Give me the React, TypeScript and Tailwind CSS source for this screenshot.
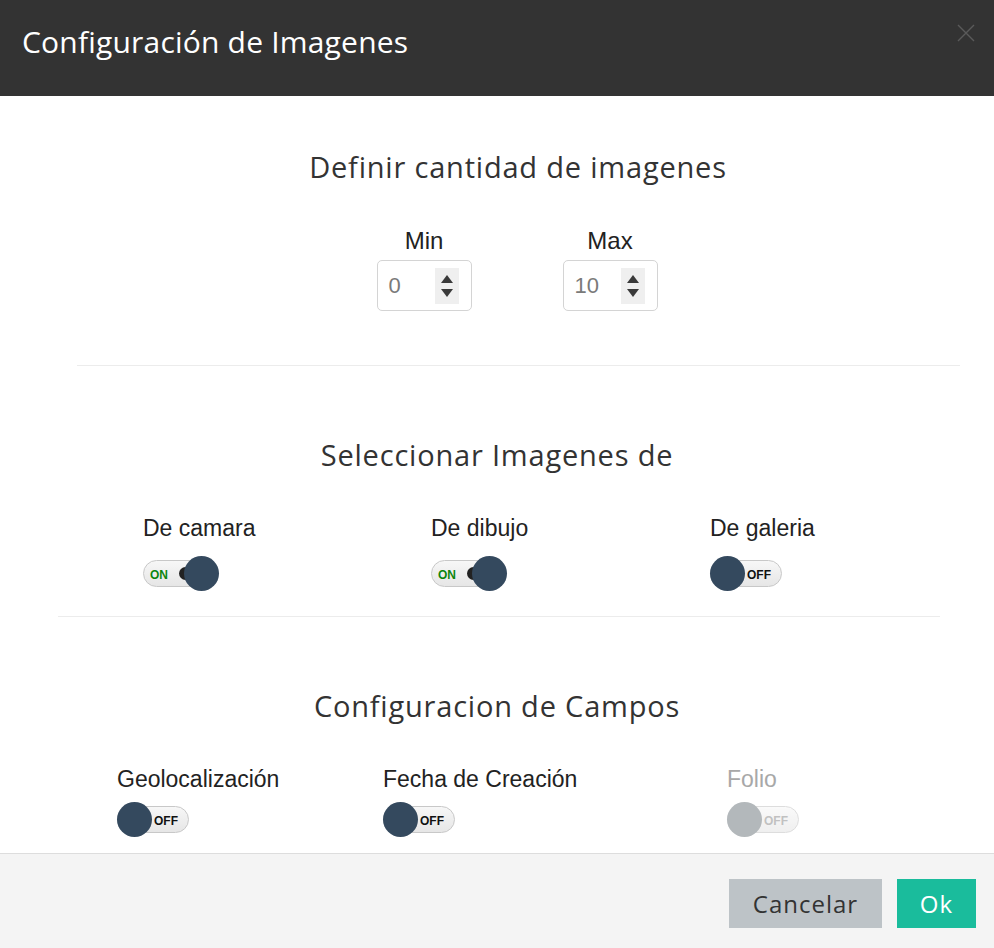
import React, { useState } from 'react';

// ==================== Constants ====================

const HEAD_FONT = "font-['Open_Sans',sans-serif]";
const BODY_FONT = "font-['Liberation_Sans',Arial,sans-serif]";

// ==================== Toggle ====================

interface ToggleProps {
  on: boolean;
  disabled?: boolean;
  onChange?: (v: boolean) => void;
}

function Toggle({ on, disabled, onChange }: ToggleProps) {
  return (
    <button
      type="button"
      onClick={() => !disabled && onChange?.(!on)}
      className="relative h-[35px] w-[76px] block"
    >
      {/* Track */}
      <span
        className={`absolute left-0 top-[4px] h-[27px] w-[72px] rounded-full border border-[#c8c8c8] bg-gradient-to-b from-[#f7f7f7] to-[#e6e6e6] ${
          disabled ? 'opacity-60' : ''
        }`}
      >
        {on ? (
          <span className={`absolute left-[6px] top-[5px] text-[12px] font-bold text-[#0d850d] ${BODY_FONT}`}>ON</span>
        ) : (
          <span
            className={`absolute left-[36px] top-[5px] text-[12px] font-bold ${
              disabled ? 'text-[#999]' : 'text-[#111]'
            } ${BODY_FONT}`}
          >
            OFF
          </span>
        )}
        {on && <span className="absolute left-[35px] top-[6px] h-[13px] w-[8px] rounded-l-full bg-[#222]" />}
      </span>
      {/* Knob */}
      <span
        className={`absolute top-0 h-[35px] w-[35px] rounded-full ${
          disabled ? 'bg-[#b3b8bb]' : 'bg-[#34495e]'
        } ${on ? 'left-[41px]' : 'left-0'}`}
      />
    </button>
  );
}

// ==================== NumberField ====================

function NumberField({ label, value }: { label: string; value: number }) {
  return (
    <div className="flex flex-col items-center">
      <span className={`text-[24px] leading-none text-[#222] mb-[7px] ${BODY_FONT}`}>{label}</span>
      <div className="flex items-center w-[95px] h-[51px] rounded-[5px] border border-[#d4d4d4] bg-white pl-[11px] pr-[12px]">
        <span className={`flex-1 text-[22px] text-[#7a7a7a] ${BODY_FONT}`}>{value}</span>
        <div className="flex flex-col items-center justify-center gap-[6px] w-[24px] h-[36px] bg-[#efefef]">
          <svg width="12" height="8" viewBox="0 0 12 8">
            <path d="M6 0L12 8H0z" fill="#3a3a3a" />
          </svg>
          <svg width="12" height="8" viewBox="0 0 12 8">
            <path d="M0 0h12L6 8z" fill="#3a3a3a" />
          </svg>
        </div>
      </div>
    </div>
  );
}

// ==================== SwitchField ====================

function SwitchField({
  label,
  on,
  disabled,
  gap,
  onChange,
}: {
  label: string;
  on: boolean;
  disabled?: boolean;
  gap: string;
  onChange?: (v: boolean) => void;
}) {
  return (
    <div className="flex flex-col items-start">
      <span
        className={`text-[23px] leading-none ${gap} ${disabled ? 'text-[#a8a8a8]' : 'text-[#222]'} ${BODY_FONT}`}
      >
        {label}
      </span>
      <Toggle on={on} disabled={disabled} onChange={onChange} />
    </div>
  );
}

// ==================== App ====================

export default function App() {
  const [camara, setCamara] = useState(true);
  const [dibujo, setDibujo] = useState(true);
  const [galeria, setGaleria] = useState(false);
  const [geo, setGeo] = useState(false);
  const [fecha, setFecha] = useState(false);

  return (
    <div className="w-[994px] h-[948px] flex flex-col bg-white overflow-hidden">
      {/* Header */}
      <div className="h-[96px] shrink-0 bg-[#333333] flex items-start justify-between pl-[22px] pr-[18px]">
        <h1 className={`mt-[21px] text-[30px] leading-[42px] text-white tracking-[0.2px] ${HEAD_FONT}`}>
          Configuración de Imagenes
        </h1>
        <svg className="mt-[24px]" width="20" height="18" viewBox="0 0 20 18">
          <path d="M2 1l16 16M18 1L2 17" stroke="#5a5a5a" strokeWidth="1.4" fill="none" />
        </svg>
      </div>

      {/* Body */}
      <div className="flex-1 flex flex-col">
        <h2 className={`mt-[54px] text-center pl-[42px] text-[29px] leading-[34px] tracking-[0.8px] text-[#333] ${HEAD_FONT}`}>
          Definir cantidad de imagenes
        </h2>
        <div className="mt-[45px] flex justify-center gap-[91px] pl-[40px]">
          <NumberField label="Min" value={0} />
          <NumberField label="Max" value={10} />
        </div>

        <div className="mt-[54px] ml-[77px] mr-[34px] border-t border-[#ececec]" />

        <h2 className={`mt-[72px] text-center text-[29px] leading-[34px] tracking-[0.8px] text-[#333] ${HEAD_FONT}`}>
          Seleccionar Imagenes de
        </h2>
        <div className="mt-[45px] grid grid-cols-[288px_279px_1fr] pl-[143px]">
          <SwitchField label="De camara" gap="mb-[16px]" on={camara} onChange={setCamara} />
          <SwitchField label="De dibujo" gap="mb-[16px]" on={dibujo} onChange={setDibujo} />
          <SwitchField label="De galeria" gap="mb-[16px]" on={galeria} onChange={setGaleria} />
        </div>

        <div className="mt-[25px] ml-[58px] mr-[54px] border-t border-[#ececec]" />

        <h2 className={`mt-[72px] text-center text-[29px] leading-[34px] tracking-[0.8px] text-[#333] ${HEAD_FONT}`}>
          Configuracion de Campos
        </h2>
        <div className="mt-[45px] grid grid-cols-[266px_344px_1fr] pl-[117px]">
          <SwitchField label="Geolocalización" gap="mb-[11px]" on={geo} onChange={setGeo} />
          <SwitchField label="Fecha de Creación" gap="mb-[11px]" on={fecha} onChange={setFecha} />
          <SwitchField label="Folio" gap="mb-[11px]" on={false} disabled />
        </div>
      </div>

      {/* Footer */}
      <div className="h-[95px] shrink-0 bg-[#f4f4f4] border-t border-[#dddddd] flex items-start justify-end gap-[15px] pr-[18px] pt-[25px]">
        <button className={`h-[49px] w-[153px] bg-[#bdc3c7] text-[24px] tracking-[1px] text-[#333] ${HEAD_FONT}`}>
          Cancelar
        </button>
        <button className={`h-[49px] w-[79px] bg-[#1abc9c] text-[24px] tracking-[1px] text-white ${HEAD_FONT}`}>Ok</button>
      </div>
    </div>
  );
}
